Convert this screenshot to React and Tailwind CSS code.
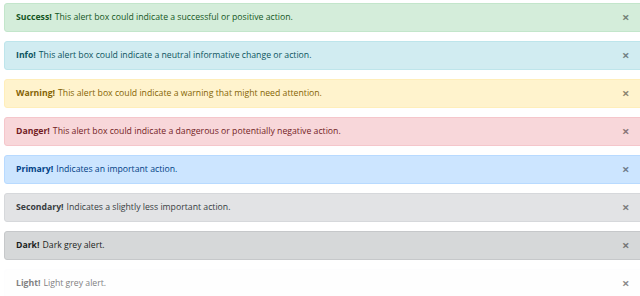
const alerts = [
  { title: "Success!", text: "This alert box could indicate a successful or positive action.", cls: "bg-[#d4edda] border-[#c3e6cb] text-[#155724]" },
  { title: "Info!", text: "This alert box could indicate a neutral informative change or action.", cls: "bg-[#d1ecf1] border-[#bee5eb] text-[#0c5460]" },
  { title: "Warning!", text: "This alert box could indicate a warning that might need attention.", cls: "bg-[#fff3cd] border-[#ffeeba] text-[#856404]" },
  { title: "Danger!", text: "This alert box could indicate a dangerous or potentially negative action.", cls: "bg-[#f8d7da] border-[#f5c6cb] text-[#721c24]" },
  { title: "Primary!", text: "Indicates an important action.", cls: "bg-[#cce5ff] border-[#b8daff] text-[#004085]" },
  { title: "Secondary!", text: "Indicates a slightly less important action.", cls: "bg-[#e2e3e5] border-[#d6d8db] text-[#383d41]" },
  { title: "Dark!", text: "Dark grey alert.", cls: "bg-[#d6d8d9] border-[#c6c8ca] text-[#1b1e21]" },
  { title: "Light!", text: "Light grey alert.", cls: "bg-[#fefefe] border-[#fdfdfe] text-[#818182]" },
];

export default function App() {
  return (
    <div className="w-[640px] h-[296px] overflow-hidden bg-white pt-[3px] pl-[4px] font-['Open_Sans',sans-serif]">
      <div className="w-[648px] flex flex-col gap-[9px]">
        {alerts.map((a) => (
          <div
            key={a.title}
            className={`relative h-[29px] rounded-[3px] border flex items-center pl-[11px] text-[8.7px] ${a.cls}`}
          >
            <span className="font-bold">{a.title}</span>
            <span className="ml-[3px]">{a.text}</span>
            <span className="absolute left-[617px] top-[7px] text-[13px] leading-none font-bold text-black opacity-45">
              ×
            </span>
          </div>
        ))}
      </div>
    </div>
  );
}
